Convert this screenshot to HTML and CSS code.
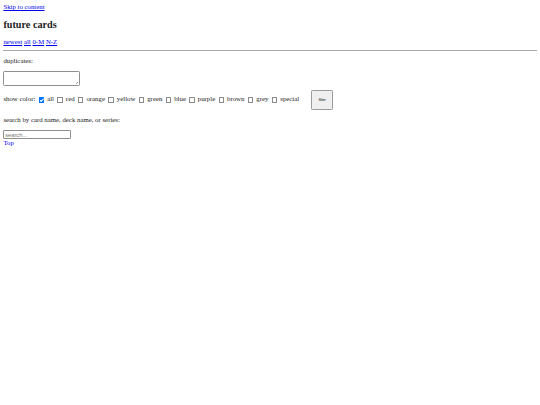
FILE: index.html
```html
<!DOCTYPE html>
<html>
<head>
<meta charset="utf-8">
<title>future cards</title>
<link rel="stylesheet" href="styles.css">
</head>
<body>
<a class="skip" href="#content">Skip to content</a>
<h1 class="title">future cards</h1>
<nav class="sort"><a href="#">newest</a> <a href="#">all</a> <a href="#">0-M</a> <a href="#">N-Z</a></nav>
<hr class="rule">
<form class="filters" id="content">
  <p class="label">duplicates:</p>
  <textarea class="dupes"></textarea>
  <p class="colors">show color: <input type="checkbox" checked> all <input type="checkbox"> red <input type="checkbox"> orange <input type="checkbox"> yellow <input type="checkbox"> green <input type="checkbox"> blue <input type="checkbox"> purple <input type="checkbox"> brown <input type="checkbox"> grey <input type="checkbox"> special <button type="button" class="filter-btn">filter</button></p>
  <p class="label">search by card name, deck name, or series:</p>
  <input class="search" type="text" placeholder="search...">
</form>
<a class="top" href="#">Top</a>
</body>
</html>
```

FILE: styles.css
```css
body {
  margin: 3.4px;
  font-family: "Liberation Serif", "Times New Roman", serif;
  font-size: 6.8px;
  color: #222;
}
a {
  color: #0000ee;
}
.title {
  font-size: 10.2px;
  margin: 8.5px 0;
}
.sort {
  margin: 0;
}
.rule {
  border: none;
  border-top: 1px solid #aaa;
  margin: 4.2px 0 3.4px;
}
.label {
  margin: 6.8px 0;
}
.dupes {
  display: block;
  box-sizing: border-box;
  width: 77px;
  height: 15.3px;
  margin: 0.85px 0 0;
  padding: 1px;
  border: 1px solid #8f8f8f;
  border-radius: 1.3px;
  resize: none;
  background:
    linear-gradient(135deg, transparent 0 55%, #999 55% 62%, transparent 62% 75%, #999 75% 82%, transparent 82%) no-repeat right 1px bottom 1px / 4px 4px,
    #fff;
}
.colors {
  margin: 4px 0 6px;
}
.colors input {
  appearance: none;
  -webkit-appearance: none;
  position: relative;
  box-sizing: border-box;
  display: inline-block;
  width: 5.5px;
  height: 5.5px;
  margin: 1.3px 1.3px 1.3px 1.7px;
  border: 0.5px solid #8a8a8a;
  border-radius: 0.6px;
  background: #fff;
  vertical-align: middle;
}
.colors input:checked {
  background: #0075ff;
  border-color: #0075ff;
}
.colors input:checked::after {
  content: "";
  position: absolute;
  left: 1.4px;
  top: 0.2px;
  width: 1.2px;
  height: 2.6px;
  border: solid #fff;
  border-width: 0 0.8px 0.8px 0;
  transform: rotate(45deg);
}
.filter-btn {
  box-sizing: border-box;
  margin-left: 10.6px;
  width: 21.7px;
  height: 19.1px;
  padding: 0;
  font-family: "Liberation Sans", Arial, sans-serif;
  font-size: 3.8px;
  color: #000;
  background: #efefef;
  border: 1px solid #9a9a9a;
  border-radius: 1.3px;
  vertical-align: middle;
}
.search {
  display: block;
  box-sizing: border-box;
  width: 68px;
  height: 9px;
  margin: 2.2px 0 0;
  padding: 0.4px 0.85px;
  font-family: "Liberation Sans", Arial, sans-serif;
  font-size: 5.7px;
  border: 1px solid #8f8f8f;
  border-radius: 1px;
}
.search::placeholder {
  color: #757575;
}
.top {
  display: block;
}
```
